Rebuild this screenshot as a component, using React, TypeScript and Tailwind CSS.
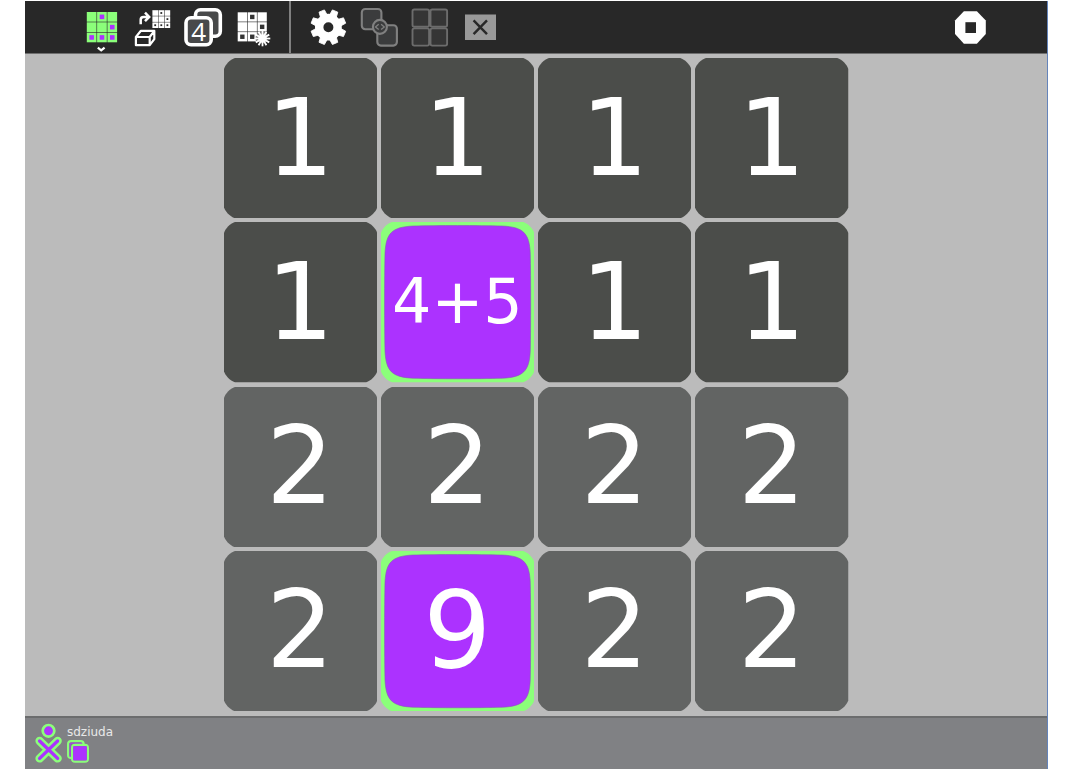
import React from "react";

type ToolProps = { label: string; box: string; children: React.ReactNode; disabled?: boolean };

function Tool({ label, box, children, disabled }: ToolProps) {
  return (
    <button type="button" aria-label={label} disabled={disabled} className="h-[52px] w-[50px] shrink-0">
      <svg viewBox={box} className="block h-full w-full" fill="none" aria-hidden="true">
        {children}
      </svg>
    </button>
  );
}

const marks = [
  [1, 0],
  [2, 1],
  [0, 2],
  [1, 2],
  [2, 2],
];

type GridProps = { x: number; y: number; pitch: number; gap: number; fill: string; mark: string; dot: number };

function MiniGrid({ x, y, pitch, gap, fill, mark, dot }: GridProps) {
  const cells = [0, 1, 2, 3, 4, 5, 6, 7, 8];
  const side = pitch - gap;
  return (
    <g>
      {cells.map((i) => (
        <rect key={i} x={x + (i % 3) * pitch} y={y + Math.floor(i / 3) * pitch} width={side} height={side} fill={fill} />
      ))}
      {marks.map(([c, r]) => (
        <rect
          key={`${c}-${r}`}
          x={x + c * pitch + (side - dot) / 2}
          y={y + r * pitch + (side - dot) / 2}
          width={dot}
          height={dot}
          fill={mark}
        />
      ))}
    </g>
  );
}

const teeth = [22.5, 67.5, 112.5, 157.5, 202.5, 247.5, 292.5, 337.5];
const rays = [0, 30, 60, 90, 120, 150];

function Toolbar() {
  return (
    <header className="flex h-[53px] shrink-0 items-start border-b border-[#6f6f6f] bg-[#282828] px-[52px]">
      <Tool label="Play numeric game" box="77 1 50 52">
        <MiniGrid x={86.8} y={12} pitch={10.3} gap={0.6} fill="#8bff7a" mark="#ac32ff" dot={4.6} />
        <path d="M97.8 47.6l3.4 2.8 3.4-2.8" stroke="#fff" strokeWidth="2.2" />
      </Tool>
      <Tool label="Load game" box="127 1 50 52">
        <MiniGrid x={152.4} y={10.2} pitch={6.1} gap={0.5} fill="#fff" mark="#282828" dot={1.8} />
        <path d="M140.7 24.3v-4.6q0-2.8 2.8-2.8h4.4M145 12.6l4.2 4.3-4.2 4.3" stroke="#fff" strokeWidth="2.5" />
        <path d="M135.9 37l5-6.2h13.4l-4.6 6.2zM135.9 37h13.8v8.2h-13.8zM149.7 45.2l4.6-6v-8.4" stroke="#fff" strokeWidth="2.2" strokeLinejoin="round" />
      </Tool>
      <Tool label="Numeric cards" box="177 1 50 52">
        <rect x="195.5" y="9.8" width="24.8" height="26.4" rx="5" fill="#48494a" stroke="#fff" strokeWidth="3.6" />
        <rect x="186" y="17.8" width="25.2" height="27" rx="5" fill="#48494a" stroke="#fff" strokeWidth="3.6" />
        <text x="198.8" y="41" textAnchor="middle" className="fill-white font-['Open_Sans',sans-serif] text-[26px]">4</text>
      </Tool>
      <Tool label="Create new game" box="227 1 50 52">
        <MiniGrid x={237.7} y={12.3} pitch={9.9} gap={0.6} fill="#fff" mark="#333" dot={4.4} />
        <circle cx="262.5" cy="38.5" r="7" fill="#282828" opacity="0.6" />
        {rays.map((a) => (
          <path key={a} d="M262.5 30.7v15.6" transform={`rotate(${a} 262.5 38.5)`} stroke="#fff" strokeWidth="1.8" />
        ))}
        <circle cx="262.5" cy="38.5" r="4.2" fill="#fff" />
      </Tool>
      <div className="mr-[13px] ml-3 h-full w-0.5 shrink-0 bg-[#808080]" />
      <Tool label="Game settings" box="304 1 50 52">
        {teeth.map((a) => (
          <path key={a} d="M324.8 16l.7-6.3h5.8l.7 6.3z" transform={`rotate(${a} 328.4 27.2)`} fill="#fff" stroke="#fff" strokeLinejoin="round" strokeWidth="0.8" />
        ))}
        <circle cx="328.4" cy="27.2" r="9.2" stroke="#fff" strokeWidth="8.4" />
      </Tool>
      <Tool label="Equal pairs" box="354 1 50 52" disabled>
        <g fill="#3b3c3d" stroke="#808080" strokeWidth="2.1">
          <rect x="361.8" y="9" width="19.6" height="20.3" rx="3.5" />
          <rect x="377.3" y="25.3" width="19.6" height="20.3" rx="3.5" />
          <circle cx="379.9" cy="26.9" r="7" />
          <path d="M378.7 24.3l-3.2 2.6 3.2 2.6M381.1 24.3l3.2 2.6-3.2 2.6" strokeWidth="1.3" />
        </g>
      </Tool>
      <Tool label="Grouped game" box="404 1 50 52" disabled>
        <g fill="#353535" stroke="#6c6c6c" strokeWidth="1.9">
          <rect x="412.5" y="9.5" width="16.6" height="17.2" rx="1.8" />
          <rect x="430.5" y="9.5" width="16.6" height="17.2" rx="1.8" />
          <rect x="412.5" y="28.4" width="16.6" height="17.2" rx="1.8" />
          <rect x="430.5" y="28.4" width="16.6" height="17.2" rx="1.8" />
        </g>
      </Tool>
      <Tool label="Clear game" box="454 1 50 52" disabled>
        <rect x="465" y="14.5" width="31" height="25.5" fill="#999" />
        <path d="M473.6 20.4l13.4 13.8M487 20.4l-13.4 13.8" stroke="#282828" strokeWidth="2.4" />
      </Tool>
      <div className="grow" />
      <Tool label="Stop" box="945 1 50 52">
        <path d="M963.9 11.2h13l8.9 9.4v13.5l-8.9 9.6h-13l-8.9-9.6V20.6z" fill="#fff" />
        <rect x="965.4" y="22.2" width="10.6" height="10.8" fill="#282828" />
      </Tool>
    </header>
  );
}

type Card = { text: string; group: 1 | 2; open?: boolean };

const cards: Card[] = [
  { text: "1", group: 1 },
  { text: "1", group: 1 },
  { text: "1", group: 1 },
  { text: "1", group: 1 },
  { text: "1", group: 1 },
  { text: "4+5", group: 1, open: true },
  { text: "1", group: 1 },
  { text: "1", group: 1 },
  { text: "2", group: 2 },
  { text: "2", group: 2 },
  { text: "2", group: 2 },
  { text: "2", group: 2 },
  { text: "2", group: 2 },
  { text: "9", group: 2, open: true },
  { text: "2", group: 2 },
  { text: "2", group: 2 },
];

function CardFace({ card }: { card: Card }) {
  const fill = card.open ? "#8bff7a" : card.group === 1 ? "#4b4d4a" : "#626463";
  return (
    <svg viewBox="0 0 153 160" preserveAspectRatio="none" className="absolute inset-0 h-full w-full" aria-hidden="true">
      <path
        d="M11 0H142C147 1.5 152 7 153 11V149C152 153 147 158.5 142 160H11C6 158.5 1 153 0 149V11C1 7 6 1.5 11 0Z"
        fill={fill}
      />
      {card.open && (
        <path
          d="M32 4C57 3.3 96 3.3 121 4C142 5 148 11 149 31C149.6 56 149.6 104 149 129C148 149 142 155 121 156C96 156.7 57 156.7 32 156C11 155 5 149 4 129C3.4 104 3.4 56 4 31C5 11 11 5 32 4Z"
          fill="#ac32ff"
          stroke="#8a55b8"
          strokeWidth="0.6"
        />
      )}
    </svg>
  );
}

function Board() {
  return (
    <main className="flex min-h-0 grow justify-center bg-[#bbbbbb] pt-1 pb-[5px]">
      <div className="grid w-full max-w-[625px] grid-cols-4 grid-rows-4 gap-1">
        {cards.map((card, i) => (
          <button key={i} type="button" className="relative flex items-center justify-center font-['DejaVu_Sans',sans-serif] text-white">
            <CardFace card={card} />
            <span className={card.text.length > 1 ? "relative text-[62px] leading-none" : "relative text-[107px] leading-none"}>{card.text}</span>
          </button>
        ))}
      </div>
    </main>
  );
}

function Players() {
  return (
    <footer className="flex h-[53px] shrink-0 items-start gap-1 border-t-2 border-[#6b6c6d] bg-[#808184] pt-1 pl-2">
      <svg viewBox="33 722 30 42" className="h-[42px] w-[30px]" fill="none" strokeLinecap="round" aria-hidden="true">
        <path d="M39.6 741l18 17.4M57.6 741l-18 17.4" stroke="#8bff7a" strokeWidth="8.4" />
        <path d="M39.6 741l18 17.4M57.6 741l-18 17.4" stroke="#ac32ff" strokeWidth="3.4" />
        <circle cx="48.5" cy="730.8" r="5.8" fill="#ac32ff" stroke="#8bff7a" strokeWidth="2.7" />
      </svg>
      <div className="flex flex-col pt-0.5">
        <span className="font-['DejaVu_Sans',sans-serif] text-xs leading-4 text-[#e9e9e9]">sdziuda</span>
        <svg viewBox="67 740 23 23" className="h-[23px] w-[23px]" strokeWidth="2.2" stroke="#8bff7a" aria-hidden="true">
          <rect x="68.1" y="741.1" width="15.5" height="16.8" rx="3" fill="#808184" />
          <path d="M70.1 757V743.2H82" fill="none" stroke="#ac32ff" strokeWidth="1" />
          <rect x="72.1" y="744.9" width="15.8" height="16.8" rx="3" fill="#808184" />
          <rect x="73.2" y="746.2" width="13.6" height="14.2" fill="#ac32ff" stroke="none" />
        </svg>
      </div>
    </footer>
  );
}

export default function App() {
  return (
    <div className="flex h-screen min-h-[560px] bg-white pt-px pr-[26px] pb-0.5 pl-[25px]">
      <div className="flex min-w-0 grow flex-col border-r border-[#6484bb]">
        <Toolbar />
        <Board />
        <Players />
      </div>
    </div>
  );
}
